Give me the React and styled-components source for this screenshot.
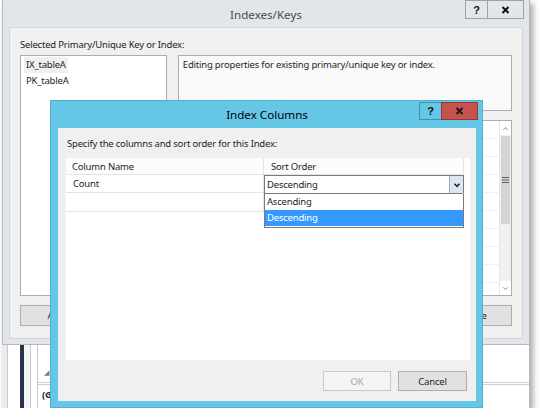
import React from 'react';
import styled, { createGlobalStyle } from 'styled-components';

const GlobalStyle = createGlobalStyle`
  * { box-sizing: border-box; }
  body {
    margin: 0;
    background: #ffffff;
    font-family: "Noto Sans", "Open Sans", sans-serif;
    font-size: 9.5px;
    letter-spacing: -0.2px;
    color: #1e1e1e;
  }
`;

const cyan = '#66c6e6';

const Screen = styled.div`
  position: relative;
  margin-left: 2px;
  width: 528px;
  height: 408px;
  display: flex;
  flex-direction: column;
  box-shadow: 3px 3px 6px rgba(0, 0, 0, 0.35);
  background: #ffffff;
`;

/* ---------- outer window ---------- */

const MainWindow = styled.div`
  width: 528px;
  height: 345px;
  flex: none;
  display: flex;
  flex-direction: column;
  padding: 0 6px 7px 6px;
  background: #e2e6ea;
  border: 1px solid #b3bac2;
  border-top: none;
`;

const TitleBar = styled.div`
  height: 27px;
  flex: none;
  display: grid;
  grid-template-columns: 1fr auto 1fr;
  align-items: center;
`;

const TitleText = styled.div`
  grid-column: 2;
  font-size: 11.6px;
  letter-spacing: 0;
  color: ${p => (p.$active ? '#000000' : '#444a50')};
  padding-top: ${p => p.$pad || 0}px;
`;

const Captions = styled.div`
  grid-column: 3;
  justify-self: end;
  align-self: start;
  display: flex;
  margin-top: ${p => p.$top || 0}px;
  margin-right: ${p => p.$right || 0}px;
`;

const CaptionButton = styled.div`
  width: ${p => p.$w}px;
  height: ${p => p.$h}px;
  display: flex;
  align-items: center;
  justify-content: center;
  background: ${p => p.$bg};
  border: 1px solid ${p => p.$border};
  margin-left: -1px;
  font-family: "Liberation Sans", Arial, sans-serif;
  font-weight: bold;
  font-size: 11px;
  letter-spacing: 0;
  color: #111111;
`;

const Client = styled.div`
  flex: 1;
  display: flex;
  flex-direction: column;
  padding: 10px 10px 12px 10px;
  background: #f0f0f0;
  border: 1px solid #d2d7dc;
`;

const Label = styled.div`
  line-height: 14px;
  height: 14px;
  white-space: nowrap;
`;

const Body = styled.div`
  margin-top: 3px;
  height: 241px;
  display: flex;
  gap: 11px;
`;

const ListBox = styled.div`
  width: 148px;
  background: #ffffff;
  border: 1px solid #abadb3;
  padding: 1px 3px;
  display: flex;
  flex-direction: column;
  align-items: flex-start;
`;

const ListItem = styled.div`
  line-height: 16px;
  padding: 0 2px;
  background: ${p => (p.$selected ? '#f0f0f0' : 'transparent')};
`;

const RightColumn = styled.div`
  width: 337px;
  display: flex;
  flex-direction: column;
  gap: 9px;
`;

const DescBox = styled.div`
  height: 56px;
  background: #f9f9f9;
  border: 1px solid #abadb3;
  padding: 1px 4px;
  line-height: 16px;
  white-space: nowrap;
`;

const PropertyGrid = styled.div`
  flex: 1;
  display: flex;
  background: #ffffff;
  border: 1px solid #abadb3;
`;

const GridArea = styled.div`
  flex: 1;
  display: flex;
  flex-direction: column;
`;

const GridLine = styled.div`
  height: 18px;
  border-bottom: 1px solid #f0f0f0;
`;

const ScrollBar = styled.div`
  width: 12px;
  display: flex;
  flex-direction: column;
  background: #f0f0f0;
  border-left: 1px solid #e6e6e6;
`;

const ScrollArrow = styled.div`
  height: 14px;
  display: flex;
  align-items: center;
  justify-content: center;
  background: #ffffff;
`;

const Thumb = styled.div`
  margin: 1px 1px 0 1px;
  height: 88px;
  background: #d4d4d4;
  display: flex;
  align-items: center;
  justify-content: center;
`;

const Track = styled.div`
  flex: 1;
`;

const ButtonRow = styled.div`
  margin-top: 9px;
  height: 21px;
  display: flex;
  gap: 6px;
`;

const Spacer = styled.div`
  flex: 1;
`;

const Button = styled.div`
  width: ${p => p.$w}px;
  height: 100%;
  display: flex;
  align-items: center;
  justify-content: center;
  background: ${p => (p.$disabled ? '#f4f4f4' : '#e1e1e1')};
  border: 1px solid ${p => (p.$disabled ? '#c8c8c8' : '#adadad')};
  color: ${p => (p.$disabled ? '#a8a8a8' : '#1e1e1e')};
`;

/* ---------- backdrop app below ---------- */

const Backdrop = styled.div`
  flex: 1;
  display: flex;
  background: #ffffff;
`;

const Strip = styled.div`
  width: ${p => p.$w}px;
  flex: none;
  background: ${p => p.$bg || '#ffffff'};
  border-right: ${p => (p.$line ? '1px solid #c9c9c9' : 'none')};
`;

const BackPanel = styled.div`
  flex: 1;
  display: flex;
  flex-direction: column;
  border-right: 1px solid #b9b9b9;
`;

const CollapseRow = styled.div`
  height: 37px;
  display: flex;
  align-items: flex-end;
  padding: 0 0 5px 6px;
  color: #7a7a7a;
  font-size: 7px;
`;

const BackLine = styled.div`
  height: 3px;
  border-top: 1px solid #cfcfcf;
  border-bottom: 1px solid #cfcfcf;
`;

const CategoryRow = styled.div`
  padding: 3px 0 0 4px;
  font-weight: bold;
`;

/* ---------- Index Columns dialog ---------- */

const Dialog = styled.div`
  position: absolute;
  left: 48px;
  top: 100px;
  width: 433px;
  height: 308px;
  display: flex;
  flex-direction: column;
  padding: 0 6px 8px 7px;
  background: ${cyan};
  border: 1px solid #4fb2d4;
`;

const DialogClient = styled.div`
  flex: 1;
  display: flex;
  flex-direction: column;
  padding: 9px 9px 10px 8px;
  background: #f0f0f0;
`;

const Instruction = styled.div`
  line-height: 14px;
  height: 14px;
  padding-left: 1px;
  white-space: nowrap;
`;

const ColumnGrid = styled.div`
  position: relative;
  margin-top: 7px;
  height: 202px;
  width: 404px;
  background: #ffffff;
`;

const Row = styled.div`
  display: flex;
  height: ${p => p.$h}px;
  width: 398px;
  border-bottom: 1px solid #e3e3e3;
  background: ${p => (p.$header ? '#fcfcfc' : '#ffffff')};
`;

const Cell = styled.div`
  width: ${p => p.$w}px;
  display: flex;
  align-items: center;
  padding-left: ${p => p.$pad || 6}px;
  border-right: 1px solid #e3e3e3;
`;

const Combo = styled.div`
  width: 200px;
  height: 19px;
  display: flex;
  align-items: center;
  background: #ffffff;
  border: 1px solid #7a7a7a;
`;

const ComboText = styled.div`
  flex: 1;
  padding-left: 2px;
`;

const ComboButton = styled.div`
  width: 14px;
  height: 100%;
  display: flex;
  align-items: center;
  justify-content: center;
  background: #dce6f0;
  border-left: 1px solid #9aa8b6;
`;

const DropList = styled.div`
  position: absolute;
  left: 198px;
  top: 36px;
  width: 200px;
  height: 34px;
  background: #ffffff;
  border: 1px solid #7a7a7a;
  border-top: none;
`;

const DropItem = styled.div`
  height: 16px;
  line-height: 16px;
  padding-left: 2px;
  background: ${p => (p.$selected ? '#3399ff' : 'transparent')};
  color: ${p => (p.$selected ? '#ffffff' : '#1e1e1e')};
`;

const DialogButtons = styled.div`
  margin-top: 11px;
  height: 20px;
  display: flex;
  justify-content: flex-end;
  gap: 7px;
`;

const Chevron = ({ up, color = '#222', size = 10, width = 1.6 }) => (
  <svg width={size} height={size} viewBox="0 0 10 10">
    <path
      d={up ? 'M2.5 6.5 L5 4 L7.5 6.5' : 'M2.5 3.8 L5 6.3 L7.5 3.8'}
      fill="none"
      stroke={color}
      strokeWidth={width}
    />
  </svg>
);

const Cross = ({ color = '#111' }) => (
  <svg width="9" height="8" viewBox="0 0 9 8">
    <path d="M1.5 1 L7.5 7 M7.5 1 L1.5 7" stroke={color} strokeWidth="2" />
  </svg>
);

const Grip = () => (
  <svg width="7" height="6" viewBox="0 0 7 6">
    <path d="M0 0.5 H7 M0 3 H7 M0 5.5 H7" stroke="#606060" strokeWidth="1" />
  </svg>
);

export default function App() {
  const gridLines = Array.from({ length: 9 });
  return (
    <>
      <GlobalStyle />
      <Screen>
        <MainWindow>
          <TitleBar>
            <TitleText $pad={2}>Indexes/Keys</TitleText>
            <Captions $right={-1}>
              <CaptionButton $w={23} $h={19} $bg="#e4e7ea" $border="#9aa2aa">?</CaptionButton>
              <CaptionButton $w={37} $h={19} $bg="#e4e7ea" $border="#9aa2aa">
                <Cross />
              </CaptionButton>
            </Captions>
          </TitleBar>
          <Client>
            <Label>Selected Primary/Unique Key or Index:</Label>
            <Body>
              <ListBox>
                <ListItem $selected>IX_tableA</ListItem>
                <ListItem>PK_tableA</ListItem>
              </ListBox>
              <RightColumn>
                <DescBox>Editing properties for existing primary/unique key or index.</DescBox>
                <PropertyGrid>
                  <GridArea>
                    {gridLines.map((_, i) => (
                      <GridLine key={i} />
                    ))}
                  </GridArea>
                  <ScrollBar>
                    <ScrollArrow>
                      <Chevron up color="#8a8a8a" width={1.1} size={9} />
                    </ScrollArrow>
                    <Thumb>
                      <Grip />
                    </Thumb>
                    <Track />
                    <ScrollArrow>
                      <Chevron color="#8a8a8a" width={1.1} size={9} />
                    </ScrollArrow>
                  </ScrollBar>
                </PropertyGrid>
              </RightColumn>
            </Body>
            <ButtonRow>
              <Button $w={72}>Add</Button>
              <Button $w={72}>Delete</Button>
              <Spacer />
              <Button $w={74}>Close</Button>
            </ButtonRow>
          </Client>
        </MainWindow>

        <Backdrop>
          <Strip $w={6} $bg="#ececec" $line />
          <Strip $w={12} />
          <Strip $w={4} $bg="#283350" />
          <Strip $w={7} $bg="#f5f5f5" $line />
          <Strip $w={7} $line />
          <BackPanel>
            <CollapseRow>◢</CollapseRow>
            <BackLine />
            <CategoryRow>(General)</CategoryRow>
          </BackPanel>
        </Backdrop>

        <Dialog>
          <TitleBar>
            <TitleText $active>Index Columns</TitleText>
            <Captions $top={1} $right={-2}>
              <CaptionButton $w={23} $h={18} $bg={cyan} $border="#3d93b3">?</CaptionButton>
              <CaptionButton $w={37} $h={18} $bg="#c7514b" $border="#8f3a35">
                <Cross color="#1a1a1a" />
              </CaptionButton>
            </Captions>
          </TitleBar>
          <DialogClient>
            <Instruction>Specify the columns and sort order for this Index:</Instruction>
            <ColumnGrid>
              <Row $h={17} $header>
                <Cell $w={198}>Column Name</Cell>
                <Cell $w={200} $pad={7}>Sort Order</Cell>
              </Row>
              <Row $h={18}>
                <Cell $w={198} $pad={7}>Count</Cell>
                <Combo>
                  <ComboText>Descending</ComboText>
                  <ComboButton>
                    <Chevron />
                  </ComboButton>
                </Combo>
              </Row>
              <Row $h={19}>
                <Cell $w={198} />
                <Cell $w={200} />
              </Row>
              <DropList>
                <DropItem>Ascending</DropItem>
                <DropItem $selected>Descending</DropItem>
              </DropList>
            </ColumnGrid>
            <Spacer />
            <DialogButtons>
              <Button $w={68} $disabled>OK</Button>
              <Button $w={69}>Cancel</Button>
            </DialogButtons>
          </DialogClient>
        </Dialog>
      </Screen>
    </>
  );
}
